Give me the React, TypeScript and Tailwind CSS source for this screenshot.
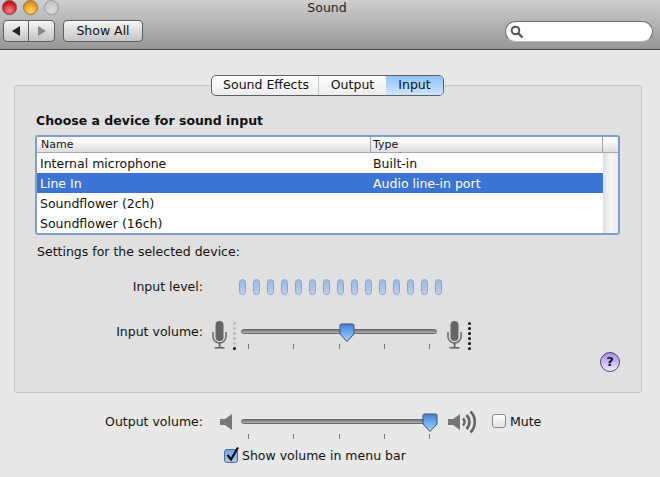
const font = { fontFamily: '"DejaVu Sans", sans-serif' };

function Light({ className }: { className: string }) {
  return <div className={`w-[15px] h-[15px] rounded-full border ${className}`} />;
}

function Mic() {
  return (
    <svg width="15" height="28" viewBox="0 0 15 28" className="shrink-0">
      <rect x="3.5" y="0" width="8" height="20" rx="4" fill="#666" />
      <path d="M1 11v4.5a6.5 6.5 0 0 0 13 0V11" fill="none" stroke="#6e6e6e" strokeWidth="1.6" />
      <rect x="6.7" y="21" width="1.8" height="5" fill="#666" />
      <rect x="2.5" y="26" width="10" height="1.6" fill="#666" />
    </svg>
  );
}

function LevelDots({ on }: { on: number }) {
  return (
    <div className="w-[3px] flex flex-col gap-[2px] shrink-0 mt-[1px]">
      {[0, 1, 2, 3, 4, 5].map((i) => (
        <div
          key={i}
          className={
            5 - i < on
              ? "w-[3px] h-[3px] rounded-full bg-black"
              : "w-[3px] h-[3px] rounded-full border border-[#aaaaaa] bg-[#d8d8d8]"
          }
        />
      ))}
    </div>
  );
}

function Slider({ thumb }: { thumb: number }) {
  return (
    <div className="relative w-[196px] shrink-0">
      <div className="h-[5px] rounded-full border border-[#6b6b6b] bg-gradient-to-b from-[#777777] to-[#b5b5b5]" />
      <div className="flex justify-between pl-[7px] pr-[7px] mt-[10px]">
        {[0, 1, 2, 3, 4].map((i) => (
          <div key={i} className="w-px h-[5px] bg-[#777777]" />
        ))}
      </div>
      <svg width="16" height="20" viewBox="0 0 16 20" className="absolute top-[-6px]" style={{ left: thumb }}>
        <defs>
          <linearGradient id="thumbFill" x1="0" y1="0" x2="0" y2="1">
            <stop offset="0" stopColor="#3f7fd6" />
            <stop offset="0.45" stopColor="#6ba8ee" />
            <stop offset="1" stopColor="#a9d2fb" />
          </linearGradient>
        </defs>
        <path
          d="M2.5 1h11a1.5 1.5 0 0 1 1.5 1.5V11l-7 7.5L1 11V2.5A1.5 1.5 0 0 1 2.5 1z"
          fill="url(#thumbFill)"
          stroke="#3f4f6a"
          strokeWidth="1"
        />
      </svg>
    </div>
  );
}

function Led() {
  return <div className="w-[7px] h-[16px] rounded-[4px] border border-[#8fa2c4] bg-gradient-to-b from-[#9db8e4] to-[#bccfee]" />;
}

const rows = [
  { name: "Internal microphone", type: "Built-in" },
  { name: "Line In", type: "Audio line-in port", selected: true },
  { name: "Soundflower (2ch)", type: "" },
  { name: "Soundflower (16ch)", type: "" },
];

export default function App() {
  return (
    <div className="w-[660px] h-[477px] overflow-hidden bg-[#e8e8e8] text-[12.5px] leading-4 text-[#111111]" style={font}>
      {/* toolbar */}
      <div className="h-[50px] border-b border-[#4a4a4a] bg-gradient-to-b from-[#cfcfcf] to-[#979797] relative">
        <div className="flex gap-[6px] pl-[2px] pt-0">
          <Light className="border-[#8a3a3a] bg-[radial-gradient(circle_at_50%_75%,#f08a8a,#d5202a_60%,#a81820)]" />
          <Light className="border-[#99702a] bg-[radial-gradient(circle_at_50%_80%,#fbd36a,#ee9a28_60%,#c47a20)]" />
          <Light className="border-[#9a9a9a] bg-[radial-gradient(circle_at_50%_75%,#dcdcdc,#bdbdbd)]" />
        </div>
        <div className="absolute top-0 inset-x-0 text-center text-[#222222] leading-[15px] pr-[6px]">Sound</div>
        <div className="flex items-start justify-between pl-[3px] pr-[7px] mt-[5px]">
          <div className="flex gap-[8px]">
            <div className="flex w-[52px] h-[22px] rounded-[4px] border border-[#5e5e5e] bg-gradient-to-b from-[#f6f6f6] to-[#c4c4c4]">
              <div className="w-[25px] flex items-center justify-center border-r border-[#5e5e5e]">
                <svg width="10" height="10" viewBox="0 0 10 10"><path d="M1 5l8-5v10z" fill="#222" /></svg>
              </div>
              <div className="flex-1 flex items-center justify-center">
                <svg width="10" height="10" viewBox="0 0 10 10"><path d="M9 5L1 0v10z" fill="#8a8a8a" /></svg>
              </div>
            </div>
            <div className="w-[80px] h-[22px] rounded-[4px] border border-[#5e5e5e] bg-gradient-to-b from-[#f6f6f6] to-[#c4c4c4] flex items-center justify-center text-[#111111]">
              Show All
            </div>
          </div>
          <div className="w-[148px] h-[21px] rounded-full border border-[#6a6a6a] border-b-[#b5b5b5] bg-white flex items-center pl-[4px] mt-[1px]">
            <svg width="14" height="14" viewBox="0 0 14 14">
              <circle cx="5.5" cy="5.5" r="3.8" fill="none" stroke="#555" strokeWidth="2" />
              <path d="M8.5 8.5l4 4" stroke="#555" strokeWidth="2.4" />
            </svg>
          </div>
        </div>
      </div>

      {/* tabs */}
      <div className="relative z-10 flex justify-center mt-[25px] pr-[5px]">
        <div className="flex h-[21px] rounded-[5px] border border-[#5f5f5f] overflow-hidden bg-gradient-to-b from-white to-[#ececec] leading-[17px]">
          <div className="w-[107px] text-center pl-[2px] border-r border-[#c8c8c8]">Sound Effects</div>
          <div className="w-[67px] text-center">Output</div>
          <div className="w-[57px] text-center bg-gradient-to-b from-[#8fc2f7] to-[#cfe6fc]">Input</div>
        </div>
      </div>

      {/* panel */}
      <div className="ml-[14px] w-[628px] h-[308px] -mt-[11px] rounded-[3px] border border-[#c8c8c8] bg-[#e0e0e0] pt-[27px] pl-[21px]">
        <div className="font-bold">Choose a device for sound input</div>
        <div className="mt-[6px] w-[585px] -ml-px rounded-[3px] border-2 border-[#7f9fcb] bg-white">
          <div className="h-[16px] flex text-[11px] border-b border-[#a8a8a8] bg-gradient-to-b from-[#ffffff] via-[#f2f2f2] to-[#dddddd] leading-[15px]">
            <div className="w-[334px] pl-[4px] border-r border-[#a0a0a0]">Name</div>
            <div className="w-[232px] pl-[2px] border-r border-[#a0a0a0]">Type</div>
          </div>
          <div className="flex">
            <div className="w-[566px]">
              {rows.map((r) => (
                <div
                  key={r.name}
                  className={r.selected ? "h-[20px] pt-px flex items-center bg-[#3b74d4] text-white" : "h-[20px] pt-px flex items-center"}
                >
                  <div className="w-[336px] pl-[3px]">{r.name}</div>
                  <div>{r.type}</div>
                </div>
              ))}
            </div>
            <div className="flex-1 bg-gradient-to-r from-[#dedede] via-[#f7f7f7] to-[#ececec]" />
          </div>
        </div>

        <div className="mt-[9px] ml-px">Settings for the selected device:</div>

        <div className="flex items-center mt-[19px] -ml-px">
          <div className="w-[168px] text-right">Input level:</div>
          <div className="flex gap-[7px] ml-[36px]">
            {Array.from({ length: 15 }).map((_, i) => (
              <Led key={i} />
            ))}
          </div>
        </div>

        <div className="flex items-start mt-[26px] -ml-px">
          <div className="w-[168px] text-right pt-[3px]">Input volume:</div>
          <div className="ml-[9px]"><Mic /></div>
          <div className="ml-[6px]"><LevelDots on={1} /></div>
          <div className="ml-[5px] mt-[8px]"><Slider thumb={98} /></div>
          <div className="ml-[10px]"><Mic /></div>
          <div className="ml-[6px]"><LevelDots on={6} /></div>
        </div>

        <div className="flex justify-end pr-[21px] mt-[2px]">
          <div className="w-[20px] h-[20px] rounded-full border border-[#4a4a6a] bg-gradient-to-b from-[#a98be8] to-[#efe8fb] flex items-center justify-center text-[13px] font-bold text-[#111144]">
            ?
          </div>
        </div>
      </div>

      {/* output */}
      <div className="flex items-start mt-[21px] ml-[14px]">
        <div className="w-[189px] text-right">Output volume:</div>
        <svg width="12" height="16" viewBox="0 0 12 16" className="ml-[17px] shrink-0">
          <path d="M0 5h5l7-5v16l-7-5H0z" fill="#777" />
        </svg>
        <div className="ml-[9px] mt-[5px]"><Slider thumb={181} /></div>
        <svg width="29" height="24" viewBox="0 0 29 24" className="ml-[11px] -mt-[4px] shrink-0">
          <path d="M0 9h5l7-5v16l-7-5H0z" fill="#777" />
          <path d="M15 8.5a5 5 0 0 1 0 7M18.5 5a10 10 0 0 1 0 14M22.5 1.5a15 15 0 0 1 0 21" fill="none" stroke="#666" strokeWidth="2.6" />
        </svg>
        <div className="ml-[15px] w-[14px] h-[14px] rounded-[3px] border border-[#8a8a8a] bg-gradient-to-b from-white to-[#e2e2e2] shrink-0" />
        <div className="ml-[4px]">Mute</div>
      </div>
      <div className="flex items-center ml-[224px] mt-[9px]">
        <div className="relative w-[14px] h-[14px] rounded-[3px] border border-[#4d6a9a] bg-gradient-to-b from-[#6ea4e6] to-[#a9cdf5] shrink-0">
          <svg width="16" height="17" viewBox="0 0 16 17" className="absolute -top-[4px] left-0">
            <path d="M2.5 9l3.5 4.5L13 1.5" fill="none" stroke="#111" strokeWidth="2.2" />
          </svg>
        </div>
        <div className="ml-[4px]">Show volume in menu bar</div>
      </div>
    </div>
  );
}
